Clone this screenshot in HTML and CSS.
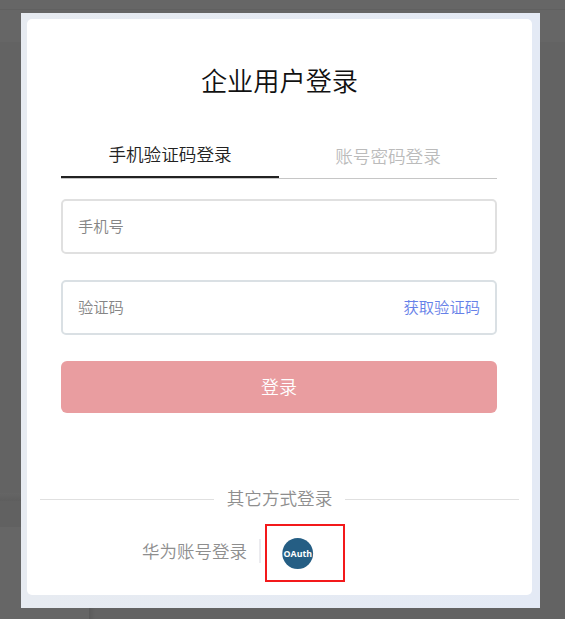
FILE: index.html
```html
<!DOCTYPE html>
<html lang="zh-CN">
<head>
    <meta charset="UTF-8">
    <meta name="viewport" content="width=device-width, initial-scale=1.0">
    <title>企业用户登录</title>
    <link rel="stylesheet" href="styles.css">
</head>
<body>
    <div class="modal">
        <div class="card">
            <h1>企业用户登录</h1>
            <div class="tabs">
                <div class="tab active">手机验证码登录</div>
                <div class="tab">账号密码登录</div>
            </div>
            <form class="login-form">
                <div class="field">
                    <input type="text" placeholder="手机号">
                </div>
                <div class="field field-code">
                    <input type="text" placeholder="验证码">
                    <a class="get-code">获取验证码</a>
                </div>
                <button type="button" class="login-btn">登录</button>
            </form>
            <div class="divider"><span>其它方式登录</span></div>
            <div class="other-login">
                <a class="huawei">华为账号登录</a>
                <div class="oauth-box">
                    <svg class="oauth" viewBox="0 0 32 32">
                        <circle cx="15.7" cy="15.5" r="15.4" fill="#255e84"/>
                        <text x="15.8" y="18.6" text-anchor="middle" textLength="28.5" lengthAdjust="spacingAndGlyphs">OAuth</text>
                    </svg>
                </div>
            </div>
        </div>
    </div>
</body>
</html>
```

FILE: styles.css
```css
* {
    margin: 0;
    padding: 0;
    box-sizing: border-box;
    font-family: "Noto Sans CJK SC", sans-serif;
}
body {
    height: 619px;
    padding: 13px 25px 11px 21px;
    overflow: hidden;
    background:
        linear-gradient(to right, #5a5a5a, #636363) 89px 608px / 6px 11px no-repeat,
        linear-gradient(#666, #666) 0 608px / 89px 11px no-repeat,
        linear-gradient(#616161, #616161) 0 501px / 21px 26px no-repeat,
        linear-gradient(#656565, #5e5e5e) 0 493px / 21px 8px no-repeat,
        linear-gradient(#666, #666) 0 527px / 21px 92px no-repeat,
        linear-gradient(#606060, #606060) 0 9px / 565px 1px no-repeat,
        linear-gradient(#666, #666) 0 0 / 565px 42px no-repeat,
        #636363;
}
.modal {
    width: 519px;
    height: 595px;
    padding: 6px 8px 13px 6px;
    background: linear-gradient(to right, #e7ebf1, #e4eaf5);
}
.card {
    height: 576px;
    background: #fff;
    border-radius: 5px;
}
h1 {
    padding-top: 42px;
    font-size: 26.2px;
    font-weight: 350;
    line-height: 38px;
    text-align: center;
    color: #111;
}
.tabs {
    display: flex;
    height: 50px;
    margin: 30px 35px 0 34px;
    background: linear-gradient(#c6c6c6, #c6c6c6) bottom / 100% 1px no-repeat;
}
.tab {
    flex: 1;
    height: 50px;
    padding-top: 14px;
    font-size: 17.6px;
    font-weight: 350;
    line-height: 26px;
    text-align: center;
    color: #bbb;
}
.tab.active {
    height: 49px;
    padding-top: 12px;
    color: #222;
    border-bottom: 2px solid #222;
}
.login-form {
    margin: 20px 35px 0 34px;
}
.field {
    display: flex;
    align-items: center;
    height: 55px;
    margin-bottom: 26px;
    padding: 0 15px 4px;
    border: 2px solid #e0e0e0;
    border-radius: 5px;
}
.field-code {
    border-color: #dae0e4;
}
.field input {
    flex: 1;
    min-width: 0;
    border: none;
    outline: none;
    font-size: 15.3px;
    font-weight: 350;
    background: none;
}
.field input::placeholder {
    color: #858585;
}
.get-code {
    font-size: 15.3px;
    font-weight: 350;
    color: #6681e8;
}
.login-btn {
    display: block;
    width: 100%;
    height: 52px;
    padding-bottom: 2px;
    border: none;
    border-radius: 6px;
    font-size: 18px;
    font-weight: 350;
    color: #fff;
    background: #e99da0;
}
.divider {
    display: flex;
    align-items: center;
    gap: 13px;
    height: 26px;
    margin: 73px 13px 0;
    font-size: 17.6px;
    font-weight: 350;
    color: #8e8e8e;
}
.divider span {
    padding-bottom: 4px;
}
.divider::before,
.divider::after {
    content: "";
    flex: 1;
    height: 1px;
    background: #e0e0e0;
}
.other-login {
    display: flex;
    align-items: center;
    height: 58px;
    margin: 12px 0 0 115px;
}
.huawei {
    height: 24px;
    margin-bottom: 4px;
    padding-right: 12px;
    border-right: 2px solid #ebebef;
    font-size: 17.5px;
    font-weight: 350;
    line-height: 23px;
    color: #8e8e8e;
}
.oauth-box {
    width: 80px;
    height: 58px;
    margin-left: 4px;
    padding: 12px 0 0 15px;
    border: 2px solid #f3191b;
}
.oauth {
    display: block;
    width: 32px;
    height: 32px;
}
.oauth text {
    font-family: "Open Sans", sans-serif;
    font-size: 9.5px;
    font-weight: bold;
    fill: #fff;
}
```
